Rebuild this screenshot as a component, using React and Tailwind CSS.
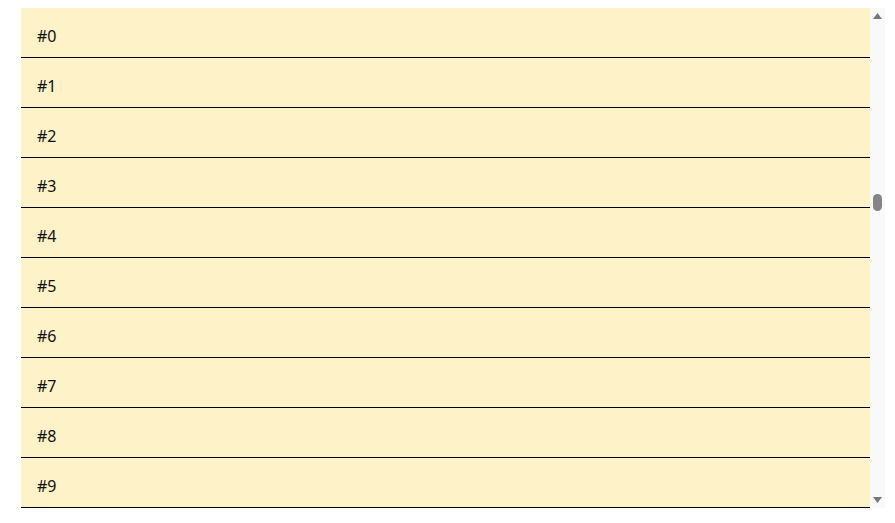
const visible = Array.from({ length: 10 }, (_, i) => i)

export default function App() {
  return (
    <div className="min-h-screen bg-white pt-2 pl-[21px]" style={{ fontFamily: '"Noto Sans", "Open Sans", sans-serif' }}>
      <div className="w-[864px] h-[500px] flex overflow-hidden">
        <div className="flex-1">
          {visible.map((i) => (
            <div key={i} className="h-[50px] px-4 pt-4 border-b border-black bg-[#fdf2c8] text-base leading-6 text-[#111]">
              #{i}
            </div>
          ))}
        </div>

        {/* scrollbar */}
        <div className="w-[15px] bg-[#f9f9f9] flex flex-col items-center pt-[5px] pb-[5px]">
          <svg width="9" height="6" viewBox="0 0 9 6">
            <path d="M4.5 0 L9 6 L0 6 Z" fill="#777777" />
          </svg>
          <div className="mt-[175px] w-[9px] h-[17px] rounded-full bg-[#858585]" />
          <div className="flex-1" />
          <svg width="9" height="6" viewBox="0 0 9 6">
            <path d="M0 0 L9 0 L4.5 6 Z" fill="#777777" />
          </svg>
        </div>
      </div>
    </div>
  )
}
